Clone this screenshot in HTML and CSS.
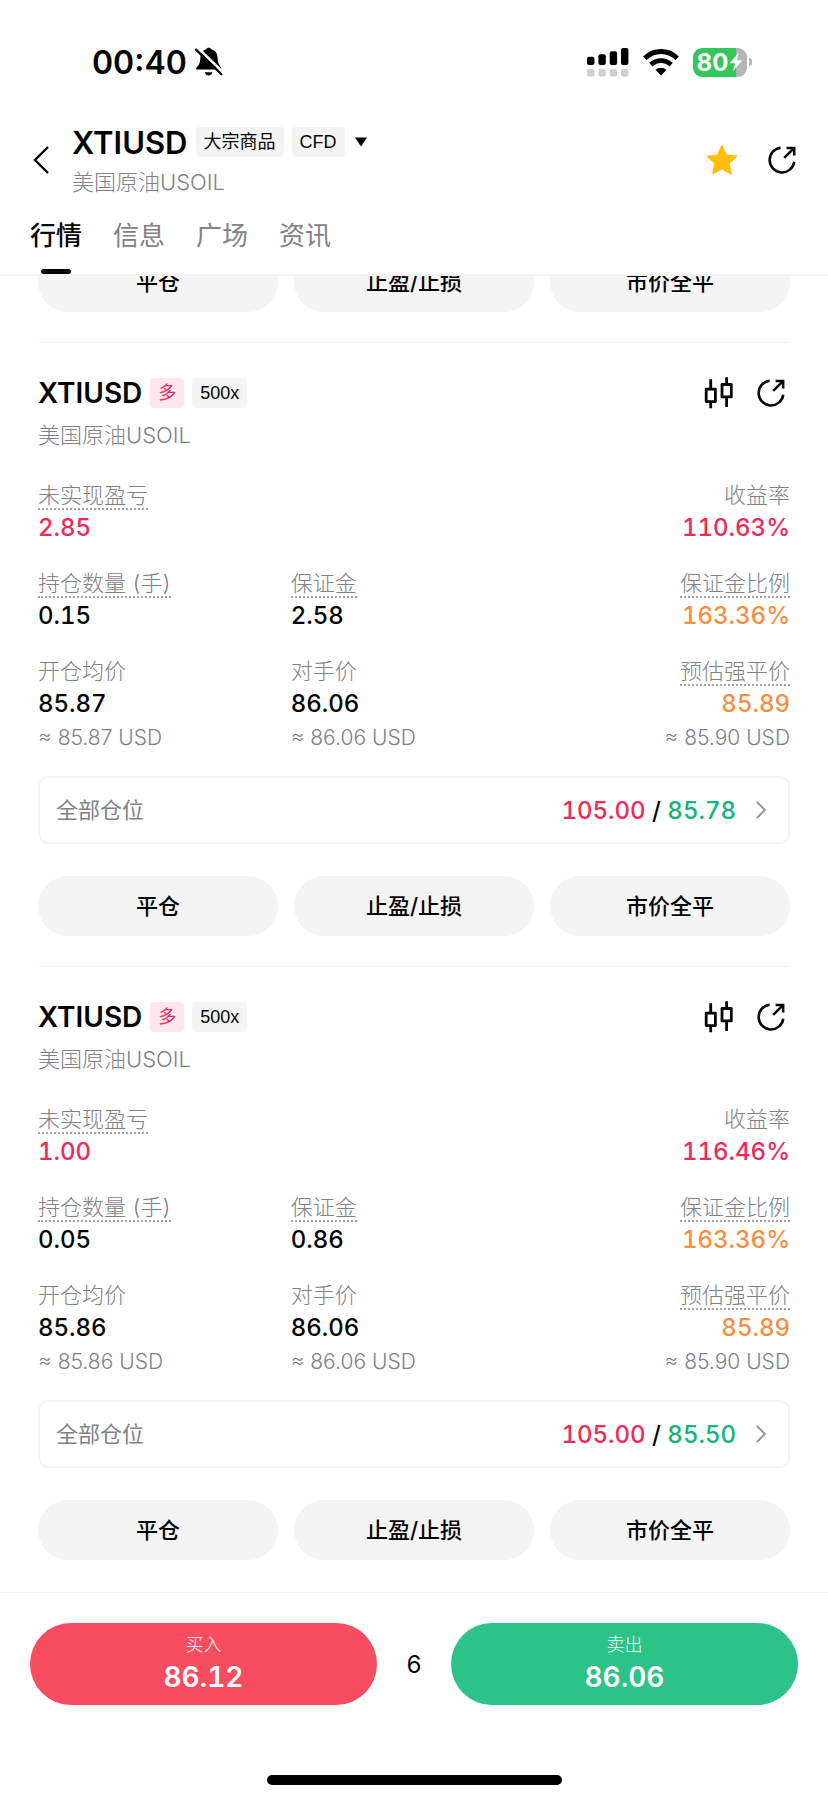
FILE: index.html
```html
<!DOCTYPE html>
<html lang="zh-CN">
<head>
  <meta charset="UTF-8">
  <title>XTIUSD 美国原油</title>
  <meta name="viewport" content="width=device-width, initial-scale=1.0">
  <link rel="stylesheet" href="styles.css">
</head>
<body>

  <!-- Shared icons -->
  <svg class="sprite" aria-hidden="true">
    <symbol id="icon-share" viewBox="0 0 28 28">
      <path d="M12.6 1.7A12.4 12.4 0 1 0 26.3 15.8M16.2 11.8L25.8 2.4M18.6 1.9H26.2V9.4" fill="none" stroke="currentColor" stroke-width="2.5"/>
    </symbol>
    <symbol id="icon-candles" viewBox="0 0 30 32">
      <path d="M6.7 2.3V11.5M6.7 25V31.3M22.6 .3V7M22.6 20.5V30M2.2 12.2H11.4V24.6H2.2ZM18 7.5H27.3V19.9H18Z" fill="none" stroke="currentColor" stroke-width="2.8" stroke-linejoin="round"/>
    </symbol>
    <symbol id="icon-chevron" viewBox="0 0 10 18">
      <path d="M1 1L8.8 9L1 17" fill="none" stroke="currentColor" stroke-width="2"/>
    </symbol>
  </svg>

  <header class="header">
    <div class="status-bar">
      <div class="status-left">
        <span class="clock">00:40</span>
        <svg class="icon-bell" viewBox="0 0 28 30">
          <path d="M1.2 22.4C1 18.8 5.4 19.5 5.4 10.6C5.4 5.5 8.5 2.9 11.4 2.2C11.9 .3 15.6 .3 16.1 2.2C20.3 3.2 22.6 6.5 22.6 11C22.6 18.5 26.6 19 26.4 22.4Z" fill="#000"/>
          <path d="M9.8 25.3H17.4C16.5 29.7 10.7 29.7 9.8 25.3Z" fill="#000"/>
          <path d="M2.8 .8L28 25.2" stroke="#fff" stroke-width="2.6"/>
          <path d="M1 2.6L26.4 27.2" stroke="#000" stroke-width="2.2" stroke-linecap="round"/>
        </svg>
      </div>
      <div class="status-right">
        <svg class="icon-signal" viewBox="0 0 42 29">
          <g fill="#000">
            <rect x="0" y="8.7" width="7.4" height="8.3" rx="2"/>
            <rect x="11.4" y="6.3" width="7.4" height="10.7" rx="2"/>
            <rect x="22.7" y="3.3" width="7.4" height="13.7" rx="2"/>
            <rect x="34" y="0" width="7.4" height="17" rx="2"/>
          </g>
          <g fill="#cfcfcf">
            <rect x="0" y="21" width="7.4" height="7.4" rx="2"/>
            <rect x="11.4" y="21" width="7.4" height="7.4" rx="2"/>
            <rect x="22.7" y="21" width="7.4" height="7.4" rx="2"/>
            <rect x="34" y="21" width="7.4" height="7.4" rx="2"/>
          </g>
        </svg>
        <svg class="icon-wifi" viewBox="0 0 36 27">
          <path d="M1.8 9.3C11 .3 25 .3 34.2 9.3" fill="none" stroke="#000" stroke-width="5"/>
          <path d="M7.8 15.6C13.8 10.2 22.2 10.2 28.2 15.6" fill="none" stroke="#000" stroke-width="4.8"/>
          <path d="M12.6 21C15.6 18 20.4 18 23.4 21L18 26.4Z" fill="#000"/>
        </svg>
        <div class="battery">
          <div class="battery-body">
            <span>80</span>
            <svg class="icon-bolt" viewBox="0 0 14 20"><path d="M9.8 .5L.6 11.2H6.2L3.8 19.5L13.4 8.2H7.8Z" fill="#fff"/></svg>
          </div>
          <i class="battery-tip"></i>
        </div>
      </div>
    </div>

    <div class="navbar">
      <button class="icon-btn back" aria-label="返回">
        <svg viewBox="0 0 16 28"><path d="M15 1L2 14L15 27" fill="none" stroke="currentColor" stroke-width="2.4"/></svg>
      </button>
      <div class="symbol">
        <div class="symbol-row">
          <h1>XTIUSD</h1>
          <span class="tag">大宗商品</span>
          <span class="tag">CFD</span>
          <svg class="caret" viewBox="0 0 12 10"><path d="M0 .5H12L6 9.5Z"/></svg>
        </div>
        <p class="sub">美国原油USOIL</p>
      </div>
      <button class="icon-btn star" aria-label="收藏">
        <svg viewBox="0 0 32 32"><path d="M16 1.8L20.2 11.2L30.4 12.3L22.8 19.2L25 29.6L16 24.6L7 29.6L9.2 19.2L1.6 12.3L11.8 11.2Z" fill="#ffbe0b" stroke="#ffbe0b" stroke-width="1.6" stroke-linejoin="round"/></svg>
      </button>
      <button class="icon-btn" aria-label="分享"><svg class="icon-share"><use href="#icon-share"/></svg></button>
    </div>

    <nav class="tabs">
      <a class="active" href="#">行情</a>
      <a href="#">信息</a>
      <a href="#">广场</a>
      <a href="#">资讯</a>
    </nav>
  </header>

  <main class="positions">
    <section class="position">
      <div class="actions">
        <button>平仓</button>
        <button>止盈/止损</button>
        <button>市价全平</button>
      </div>
    </section>

    <section class="position">
      <div class="position-head">
        <h2>XTIUSD</h2>
        <span class="tag tag-long">多</span>
        <span class="tag">500x</span>
        <button class="icon-btn push" aria-label="K线"><svg class="icon-candles"><use href="#icon-candles"/></svg></button>
        <button class="icon-btn" aria-label="分享"><svg class="icon-share"><use href="#icon-share"/></svg></button>
      </div>
      <p class="sub">美国原油USOIL</p>
      <dl class="fields">
        <div class="wide"><dt><span class="hint">未实现盈亏</span></dt><dd class="red">2.85</dd></div>
        <div class="right"><dt>收益率</dt><dd class="red">110.63%</dd></div>
        <div><dt><span class="hint">持仓数量 (手)</span></dt><dd>0.15</dd></div>
        <div><dt><span class="hint">保证金</span></dt><dd>2.58</dd></div>
        <div class="right"><dt><span class="hint">保证金比例</span></dt><dd class="orange">163.36%</dd></div>
        <div><dt>开仓均价</dt><dd>85.87</dd><dd class="approx">≈ 85.87 USD</dd></div>
        <div><dt>对手价</dt><dd>86.06</dd><dd class="approx">≈ 86.06 USD</dd></div>
        <div class="right"><dt><span class="hint">预估强平价</span></dt><dd class="orange">85.89</dd><dd class="approx">≈ 85.90 USD</dd></div>
      </dl>
      <a class="limits" href="#">
        <span class="limits-label">全部仓位</span>
        <span><span class="red">105.00</span> / <span class="green">85.78</span></span>
        <svg class="icon-chevron"><use href="#icon-chevron"/></svg>
      </a>
      <div class="actions">
        <button>平仓</button>
        <button>止盈/止损</button>
        <button>市价全平</button>
      </div>
    </section>

    <section class="position">
      <div class="position-head">
        <h2>XTIUSD</h2>
        <span class="tag tag-long">多</span>
        <span class="tag">500x</span>
        <button class="icon-btn push" aria-label="K线"><svg class="icon-candles"><use href="#icon-candles"/></svg></button>
        <button class="icon-btn" aria-label="分享"><svg class="icon-share"><use href="#icon-share"/></svg></button>
      </div>
      <p class="sub">美国原油USOIL</p>
      <dl class="fields">
        <div class="wide"><dt><span class="hint">未实现盈亏</span></dt><dd class="red">1.00</dd></div>
        <div class="right"><dt>收益率</dt><dd class="red">116.46%</dd></div>
        <div><dt><span class="hint">持仓数量 (手)</span></dt><dd>0.05</dd></div>
        <div><dt><span class="hint">保证金</span></dt><dd>0.86</dd></div>
        <div class="right"><dt><span class="hint">保证金比例</span></dt><dd class="orange">163.36%</dd></div>
        <div><dt>开仓均价</dt><dd>85.86</dd><dd class="approx">≈ 85.86 USD</dd></div>
        <div><dt>对手价</dt><dd>86.06</dd><dd class="approx">≈ 86.06 USD</dd></div>
        <div class="right"><dt><span class="hint">预估强平价</span></dt><dd class="orange">85.89</dd><dd class="approx">≈ 85.90 USD</dd></div>
      </dl>
      <a class="limits" href="#">
        <span class="limits-label">全部仓位</span>
        <span><span class="red">105.00</span> / <span class="green">85.50</span></span>
        <svg class="icon-chevron"><use href="#icon-chevron"/></svg>
      </a>
      <div class="actions">
        <button>平仓</button>
        <button>止盈/止损</button>
        <button>市价全平</button>
      </div>
    </section>
  </main>

  <footer class="trade-bar">
    <div class="trade-row">
      <button class="trade buy"><small>买入</small><strong>86.12</strong></button>
      <span class="spread">6</span>
      <button class="trade sell"><small>卖出</small><strong>86.06</strong></button>
    </div>
    <div class="home-indicator"></div>
  </footer>

</body>
</html>
```
FILE: styles.css
```css
:root {
  --text: #050505;
  --muted: #808285;
  --line: #f3f3f4;
  --chip: #f4f4f4;
  --red: #ee2a5b;
  --green: #12b37c;
  --orange: #f98e45;
  --buy: #f84c60;
  --sell: #2bc388;
}

* {
  margin: 0;
  padding: 0;
  box-sizing: border-box;
}

body {
  height: 100vh;
  display: flex;
  flex-direction: column;
  background: #fff;
  color: var(--text);
  font-family: Inter, "Noto Sans CJK SC", sans-serif;
  font-size: 22px;
  font-variant-numeric: tabular-nums;
}

button {
  border: none;
  background: none;
  color: inherit;
  font: inherit;
  cursor: pointer;
}

a {
  color: inherit;
  text-decoration: none;
}

svg {
  display: block;
}

.sprite {
  position: absolute;
  width: 0;
  height: 0;
}

/* Header */
.header {
  border-bottom: 2px solid var(--line);
}

.status-bar {
  display: flex;
  justify-content: space-between;
  align-items: center;
  height: 124px;
  padding: 0 76px 0 92px;
  font-variant-numeric: normal;
}

.status-left,
.status-right {
  display: flex;
  align-items: center;
}

.status-left {
  gap: 8px;
}

.status-right {
  gap: 14px;
}

.clock {
  font-size: 32px;
  font-weight: 600;
}

.icon-bell {
  width: 28px;
  height: 30px;
}

.icon-signal {
  width: 42px;
  height: 29px;
}

.icon-wifi {
  width: 36px;
  height: 27px;
}

.battery {
  display: flex;
  align-items: center;
  gap: 2px;
}

.battery-body {
  display: flex;
  align-items: center;
  justify-content: center;
  gap: 1px;
  width: 54px;
  height: 29px;
  border-radius: 9px;
  background: linear-gradient(to right, #33c759 80%, #b5b5b5 80%);
  color: #fff;
  font-size: 24px;
  font-weight: 700;
  line-height: 29px;
}

.icon-bolt {
  width: 14px;
  height: 20px;
}

.battery-tip {
  width: 3px;
  height: 8px;
  border-radius: 0 4px 4px 0;
  background: #b5b5b5;
}

.navbar {
  display: flex;
  align-items: center;
  padding: 0 32px 0 30px;
}

.icon-btn svg {
  width: 28px;
  height: 28px;
}

.back {
  margin-right: 23px;
  padding-left: 3px;
}

.icon-btn.back svg {
  width: 16px;
}

.symbol {
  flex: 1;
}

.symbol-row,
.position-head {
  display: flex;
  align-items: center;
  gap: 8px;
}

.symbol-row {
  height: 36px;
  margin-bottom: 8px;
}

h1,
h2 {
  font-size: 31px;
  font-weight: 600;
}

h2 {
  font-size: 28px;
}

.tag {
  padding: 0 8px;
  border-radius: 4px;
  background: var(--chip);
  font-family: "Liberation Sans", "Noto Sans CJK SC", sans-serif;
  font-size: 18px;
  line-height: 30px;
}

.tag-long {
  background: #fee7ed;
  color: var(--red);
}

.caret {
  width: 12px;
  height: 10px;
  margin-left: 2px;
}

.sub {
  color: var(--muted);
  font-weight: 300;
  line-height: 28px;
}

.star {
  margin-right: 30px;
}

.icon-btn.star svg {
  width: 32px;
  height: 32px;
}

.tabs {
  display: flex;
  gap: 31px;
  margin-top: 10px;
  padding: 0 30px;
}

.tabs a {
  position: relative;
  padding: 12px 0 20px;
  color: var(--muted);
  font-size: 26px;
  line-height: 36px;
}

.tabs .active {
  color: var(--text);
  font-weight: 500;
}

.tabs .active::after {
  content: "";
  position: absolute;
  left: 50%;
  bottom: 0;
  width: 30px;
  height: 5px;
  margin-left: -15px;
  border-radius: 3px;
  background: var(--text);
}

/* Position list, scrolled to the end */
.positions {
  flex: 1;
  min-height: 0;
  display: flex;
  flex-direction: column;
  justify-content: flex-end;
  overflow: hidden;
  padding: 0 38px 2px;
}

.position {
  flex: none;
  padding: 30px 0;
  border-bottom: 1px solid var(--line);
}

.position:last-child {
  border-bottom: none;
}

.position-head {
  height: 40px;
  margin-bottom: 8px;
}

.position-head .icon-candles {
  width: 30px;
  height: 32px;
}

.push {
  margin-left: auto;
  margin-right: 15px;
}

.position-head .icon-btn:last-child {
  margin-right: 5px;
}

.fields {
  display: grid;
  grid-template-columns: repeat(3, 1fr);
  gap: 24px 6px;
  margin-top: 31px;
}

.fields .wide {
  grid-column: span 2;
}

.fields .right {
  text-align: right;
}

.fields dt {
  height: 30px;
  color: var(--muted);
  font-weight: 300;
  line-height: 30px;
}

.hint {
  display: inline-block;
  height: 30px;
  border-bottom: 2px dotted #a0a2a4;
}

.fields dd {
  margin-top: 2px;
  font-size: 24px;
  font-weight: 500;
  line-height: 32px;
}

.fields .approx {
  color: var(--muted);
  font-size: 21px;
  font-weight: 300;
  font-variant-numeric: normal;
}

.fields .red,
.red {
  color: var(--red);
}

.fields .orange {
  color: var(--orange);
}

.green {
  color: var(--green);
}

.limits {
  display: flex;
  align-items: center;
  height: 68px;
  margin-top: 22px;
  padding: 0 22px 0 16px;
  border: 2px solid var(--line);
  border-radius: 10px;
  font-size: 24px;
  font-weight: 500;
}

.limits-label {
  flex: 1;
  padding-bottom: 4px;
  color: var(--muted);
  font-size: 22px;
  font-weight: 400;
}

.icon-chevron {
  width: 10px;
  height: 18px;
  margin-left: 20px;
  color: #929497;
}

.actions {
  display: grid;
  grid-template-columns: repeat(3, 1fr);
  gap: 16px;
  margin-top: 32px;
}

.actions button {
  height: 60px;
  padding-bottom: 4px;
  border-radius: 30px;
  background: var(--chip);
  font-weight: 500;
}

/* Bottom bar */
.trade-bar {
  padding: 30px 30px 15px;
  border-top: 1px solid var(--line);
}

.trade-row {
  display: grid;
  grid-template-columns: 1fr 74px 1fr;
  align-items: center;
}

.trade {
  display: flex;
  flex-direction: column;
  align-items: center;
  justify-content: center;
  height: 82px;
  padding-bottom: 4px;
  border-radius: 41px;
  color: #fff;
}

.trade small {
  font-size: 18px;
  font-weight: 300;
  line-height: 30px;
}

.trade strong {
  font-size: 28px;
  font-weight: 600;
  line-height: 34px;
}

.buy {
  background: var(--buy);
}

.sell {
  background: var(--sell);
}

.spread {
  font-size: 24px;
  text-align: center;
}

.home-indicator {
  width: 295px;
  height: 10px;
  margin: 70px auto 0;
  border-radius: 5px;
  background: #000;
}
```
